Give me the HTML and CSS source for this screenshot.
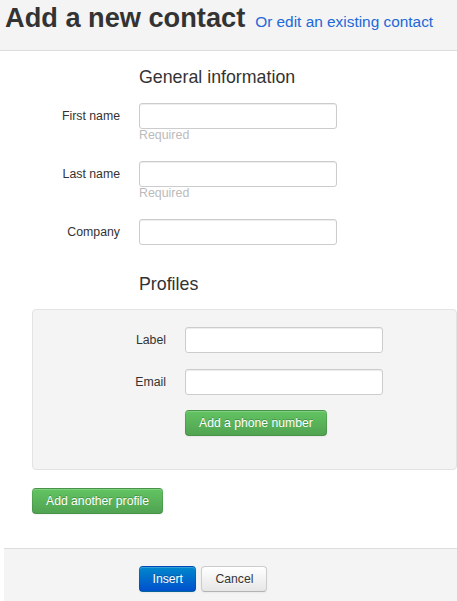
FILE: index.html
```html
<!DOCTYPE html>
<html lang="en">
<head>
<meta charset="utf-8">
<title>Add a new contact</title>
<link rel="stylesheet" href="styles.css">
</head>
<body>
<header class="page-header">
  <h1 class="title">Add a new contact</h1>
  <a class="title-link" href="#">Or edit an existing contact</a>
</header>
<main class="content">
  <h3 class="section-title">General information</h3>
  <div class="form-row has-help">
    <label class="row-label">First name</label>
    <div class="controls">
      <input class="text-input" type="text">
      <div class="help">Required</div>
    </div>
  </div>
  <div class="form-row has-help">
    <label class="row-label">Last name</label>
    <div class="controls">
      <input class="text-input" type="text">
      <div class="help">Required</div>
    </div>
  </div>
  <div class="form-row">
    <label class="row-label">Company</label>
    <div class="controls">
      <input class="text-input" type="text">
    </div>
  </div>

  <h3 class="section-title profiles-title">Profiles</h3>
  <div class="well">
    <div class="well-row">
      <label class="row-label">Label</label>
      <div class="controls"><input class="text-input" type="text"></div>
    </div>
    <div class="well-row">
      <label class="row-label">Email</label>
      <div class="controls"><input class="text-input" type="text"></div>
    </div>
    <div class="well-row last">
      <span></span>
      <div class="controls"><button class="btn btn-success" type="button">Add a phone number</button></div>
    </div>
  </div>
  <div class="add-profile">
    <button class="btn btn-success" type="button">Add another profile</button>
  </div>
</main>
<footer class="form-actions">
  <button class="btn btn-primary" type="button">Insert</button>
  <button class="btn btn-default" type="button">Cancel</button>
</footer>
</body>
</html>
```

FILE: styles.css
```css
html, body {
  margin: 0;
  padding: 0;
  background: #ffffff;
  overflow: hidden;
}
body {
  font-family: "Liberation Sans", Arial, sans-serif;
  color: #333333;
  font-size: 12px;
}

.page-header {
  box-sizing: content-box;
  height: 47px;
  padding: 3px 0 0 5px;
  background: #f4f4f4;
  border-bottom: 1px solid #dddddd;
  display: flex;
  align-items: baseline;
  gap: 10px;
}
.title {
  margin: 0;
  font-size: 27.2px;
  line-height: 30px;
  font-weight: bold;
  color: #333333;
}
.title-link {
  font-size: 15.4px;
  color: #2168d8;
  text-decoration: none;
}

.content {
  padding-top: 16px;
}
.section-title {
  margin: 0 0 16px 139px;
  font-size: 17.8px;
  line-height: 20px;
  font-weight: normal;
  color: #333333;
}
.profiles-title {
  margin-top: 29px;
  margin-bottom: 15px;
}

.form-row {
  display: grid;
  grid-template-columns: 120px 198px;
  column-gap: 19px;
}
.form-row.has-help {
  margin-bottom: 19px;
}
.row-label {
  text-align: right;
  line-height: 26px;
  font-size: 12.3px;
  color: #333333;
}
.controls {
  display: flex;
  flex-direction: column;
  align-items: flex-start;
}
.text-input {
  width: 198px;
  height: 26px;
  box-sizing: border-box;
  margin: 0;
  padding: 2px 6px;
  border: 1px solid #cccccc;
  border-radius: 3px;
  background: #ffffff;
  box-shadow: inset 0 1px 1px rgba(0, 0, 0, 0.075);
  font: 12px "Liberation Sans", Arial, sans-serif;
}
.help {
  font-size: 12.4px;
  line-height: 13px;
  color: #bbbbbb;
}

.well {
  margin-left: 32px;
  padding: 17px 0 33px 0;
  background: #f4f4f4;
  border: 1px solid #e3e3e3;
  border-radius: 4px;
}
.well-row {
  display: grid;
  grid-template-columns: 133px 198px;
  column-gap: 19px;
  margin-bottom: 16px;
}
.well-row + .well-row.last {
  margin-top: -1px;
}
.well-row.last {
  margin-bottom: 0;
}

.add-profile {
  margin: 18px 0 0 32px;
}

.btn {
  display: inline-block;
  height: 26px;
  box-sizing: border-box;
  margin: 0;
  padding: 0 13px;
  font: 12.2px/24px "Liberation Sans", Arial, sans-serif;
  border-radius: 4px;
  border: 1px solid;
  cursor: pointer;
  box-shadow: inset 0 1px 0 rgba(255, 255, 255, 0.2), 0 1px 2px rgba(0, 0, 0, 0.05);
}
.btn-success {
  color: #ffffff;
  text-shadow: 0 -1px 0 rgba(0, 0, 0, 0.25);
  background: linear-gradient(to bottom, #62c462, #51a351);
  border-color: rgba(0, 0, 0, 0.1) rgba(0, 0, 0, 0.1) rgba(0, 0, 0, 0.25);
}
.btn-primary {
  color: #ffffff;
  text-shadow: 0 -1px 0 rgba(0, 0, 0, 0.25);
  background: linear-gradient(to bottom, #0088cc, #0050cc);
  border-color: rgba(0, 0, 0, 0.1) rgba(0, 0, 0, 0.1) rgba(0, 0, 0, 0.25);
  padding: 0 12.5px;
}
.btn-default {
  color: #333333;
  text-shadow: 0 1px 1px rgba(255, 255, 255, 0.75);
  background: linear-gradient(to bottom, #ffffff, #e6e6e6);
  border-color: #cccccc #cccccc #b3b3b3;
}

.form-actions {
  margin: 34px 0 0 4px;
  padding: 17px 0 9px 135px;
  background: #f4f4f4;
  border-top: 1px solid #dddddd;
  display: flex;
  gap: 5px;
}
```
